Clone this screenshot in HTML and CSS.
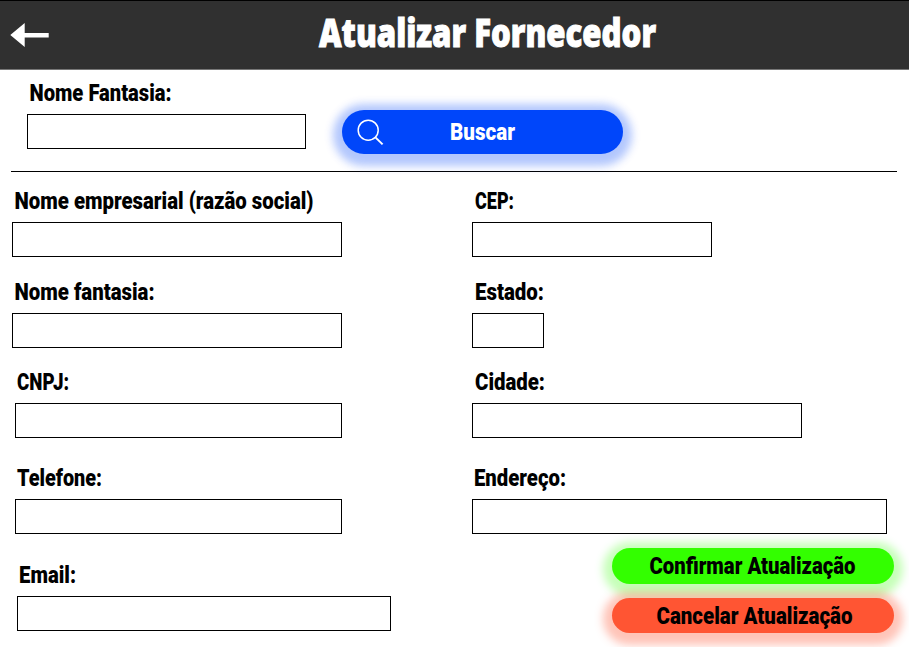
FILE: index.html
```html
<!DOCTYPE html>
<html lang="pt-BR">
<head>
<meta charset="utf-8">
<title>Atualizar Fornecedor</title>
<link rel="stylesheet" href="styles.css">
</head>
<body>
<header class="topbar">
  <a class="back" href="#"><svg width="40" height="26" viewBox="0 0 40 26"><path d="M0.3 13 14.7 1V11H38.7V15.4H14.7V25Z" fill="#fff"/></svg></a>
  <h1 class="title"><svg width="350" height="50"><text x="1" y="37.5" textLength="337" lengthAdjust="spacingAndGlyphs">Atualizar Fornecedor</text></svg></h1>
</header>
<section class="search">
  <div class="field">
    <label class="label search-label" for="busca"><svg width="160" height="30"><text x="0.5" y="17" textLength="142" lengthAdjust="spacingAndGlyphs">Nome Fantasia:</text></svg></label>
    <input class="box w-search" id="busca">
  </div>
  <button class="btn btn-search">
    <svg class="lens" width="27" height="27" viewBox="0 0 27 27" fill="none" stroke="#fff" stroke-width="1.5"><circle cx="11.2" cy="11.2" r="10"/><path d="M18.4 18.4 25.6 25.4" stroke-width="2"/></svg>
    <svg class="search-text" width="80" height="30"><text x="0" y="22" textLength="65" lengthAdjust="spacingAndGlyphs">Buscar</text></svg>
  </button>
</section>
<main class="form">
  <div class="column">
    <div class="field gap-a">
      <label class="label" for="empresa"><svg width="340" height="30"><text x="2.5" y="17" textLength="299" lengthAdjust="spacingAndGlyphs">Nome empresarial (razão social)</text></svg></label>
      <input class="box w-330" id="empresa">
    </div>
    <div class="field gap-b">
      <label class="label" for="fantasia"><svg width="180" height="30"><text x="2.5" y="16.5" textLength="140" lengthAdjust="spacingAndGlyphs">Nome fantasia:</text></svg></label>
      <input class="box w-330" id="fantasia">
    </div>
    <div class="field gap-c inset-3">
      <label class="label" for="cnpj"><svg width="100" height="30"><text x="2" y="17" textLength="52" lengthAdjust="spacingAndGlyphs">CNPJ:</text></svg></label>
      <input class="box w-327" id="cnpj">
    </div>
    <div class="field gap-d inset-3">
      <label class="label" for="telefone"><svg width="130" height="30"><text x="2" y="17" textLength="85" lengthAdjust="spacingAndGlyphs">Telefone:</text></svg></label>
      <input class="box w-327" id="telefone">
    </div>
    <div class="field inset-5">
      <label class="label" for="email"><svg width="100" height="30"><text x="2" y="16.5" textLength="57" lengthAdjust="spacingAndGlyphs">Email:</text></svg></label>
      <input class="box w-374" id="email">
    </div>
  </div>
  <div class="column">
    <div class="field gap-a">
      <label class="label" for="cep"><svg width="80" height="30"><text x="3" y="17" textLength="39" lengthAdjust="spacingAndGlyphs">CEP:</text></svg></label>
      <input class="box w-240" id="cep">
    </div>
    <div class="field gap-b">
      <label class="label" for="estado"><svg width="110" height="30"><text x="3" y="16.5" textLength="69" lengthAdjust="spacingAndGlyphs">Estado:</text></svg></label>
      <input class="box w-72" id="estado">
    </div>
    <div class="field gap-c">
      <label class="label" for="cidade"><svg width="110" height="30"><text x="3" y="17" textLength="70" lengthAdjust="spacingAndGlyphs">Cidade:</text></svg></label>
      <input class="box w-330" id="cidade">
    </div>
    <div class="field">
      <label class="label" for="endereco"><svg width="140" height="30"><text x="2" y="17" textLength="92" lengthAdjust="spacingAndGlyphs">Endereço:</text></svg></label>
      <input class="box w-415" id="endereco">
    </div>
    <div class="actions">
      <button class="btn btn-confirm"><svg width="240" height="30"><text x="0.5" y="23" textLength="206" lengthAdjust="spacingAndGlyphs">Confirmar Atualização</text></svg></button>
      <button class="btn btn-cancel"><svg width="235" height="30"><text x="0.5" y="22.5" textLength="196" lengthAdjust="spacingAndGlyphs">Cancelar Atualização</text></svg></button>
    </div>
  </div>
</main>
</body>
</html>
```
FILE: styles.css
```css
* { box-sizing: border-box; }
body {
  margin: 0;
  width: 909px;
  height: 647px;
  overflow: hidden;
  background: #fff;
  color: #000;
  font-family: Roboto, "Liberation Sans", sans-serif;
  font-size: 23.5px;
  font-weight: 900;
}
svg { display: block; flex: none; overflow: visible; }
text { fill: currentColor; }
.topbar {
  display: flex;
  height: 70px;
  padding-left: 10px;
  background: #303030;
  border-top: 1px solid #000;
  border-bottom: 1px solid #777;
}
.back { padding-top: 21px; }
.title {
  margin: 8px 0 0 268px;
  color: #fff;
  font-family: "Open Sans", sans-serif;
  font-size: 38px;
  font-weight: 800;
}
.title text { stroke: #fff; stroke-width: 1px; }
.search {
  display: flex;
  height: 102px;
  margin: 0 12px 0 11px;
  padding: 14px 0 0 16px;
  border-bottom: 1px solid #000;
}
.field { height: 66px; }
.label { display: block; }
.search-label { padding-left: 2px; }
.box {
  display: block;
  height: 35px;
  padding: 0 8px;
  border: 1px solid #000;
  border-radius: 0;
  background: #fff;
  font: 18px Roboto, sans-serif;
  outline: 0;
}
.w-search { width: 279px; }
.w-330 { width: 330px; }
.w-327 { width: 327px; }
.w-374 { width: 374px; }
.w-240 { width: 240px; }
.w-72 { width: 72px; }
.w-415 { width: 415px; }
.form {
  display: grid;
  grid-template-columns: 460px 1fr;
  padding: 20px 0 0 12px;
}
.gap-a { margin-bottom: 25px; }
.gap-b { margin-bottom: 24px; }
.gap-c { margin-bottom: 30px; }
.gap-d { margin-bottom: 31px; }
.inset-3 { padding-left: 3px; }
.inset-5 { padding-left: 5px; }
.btn {
  display: flex;
  align-items: flex-start;
  width: 281.5px;
  height: 35.5px;
  padding: 0;
  border: 0;
  border-radius: 23px;
  color: #000;
  font: inherit;
}
.btn-search {
  height: 44.5px;
  margin: 25.5px 0 0 35.5px;
  background: #0046fa;
  color: #fff;
  box-shadow: 0 3px 9px 9px rgba(0, 70, 250, .3);
}
.lens { margin: 9.5px 0 0 15px; }
.search-text { margin: 8.5px 0 0 66.5px; }
.actions {
  display: flex;
  flex-direction: column;
  gap: 14px;
  padding: 13px 0 0 140px;
}
.btn-confirm {
  padding: 3px 0 0 37px;
  background: #3f0;
  box-shadow: 0 3px 9px 9px rgba(51, 255, 0, .28);
}
.btn-cancel {
  padding: 3px 0 0 44px;
  background: #ff5533;
  box-shadow: 0 3px 9px 9px rgba(255, 85, 51, .35);
}
```
